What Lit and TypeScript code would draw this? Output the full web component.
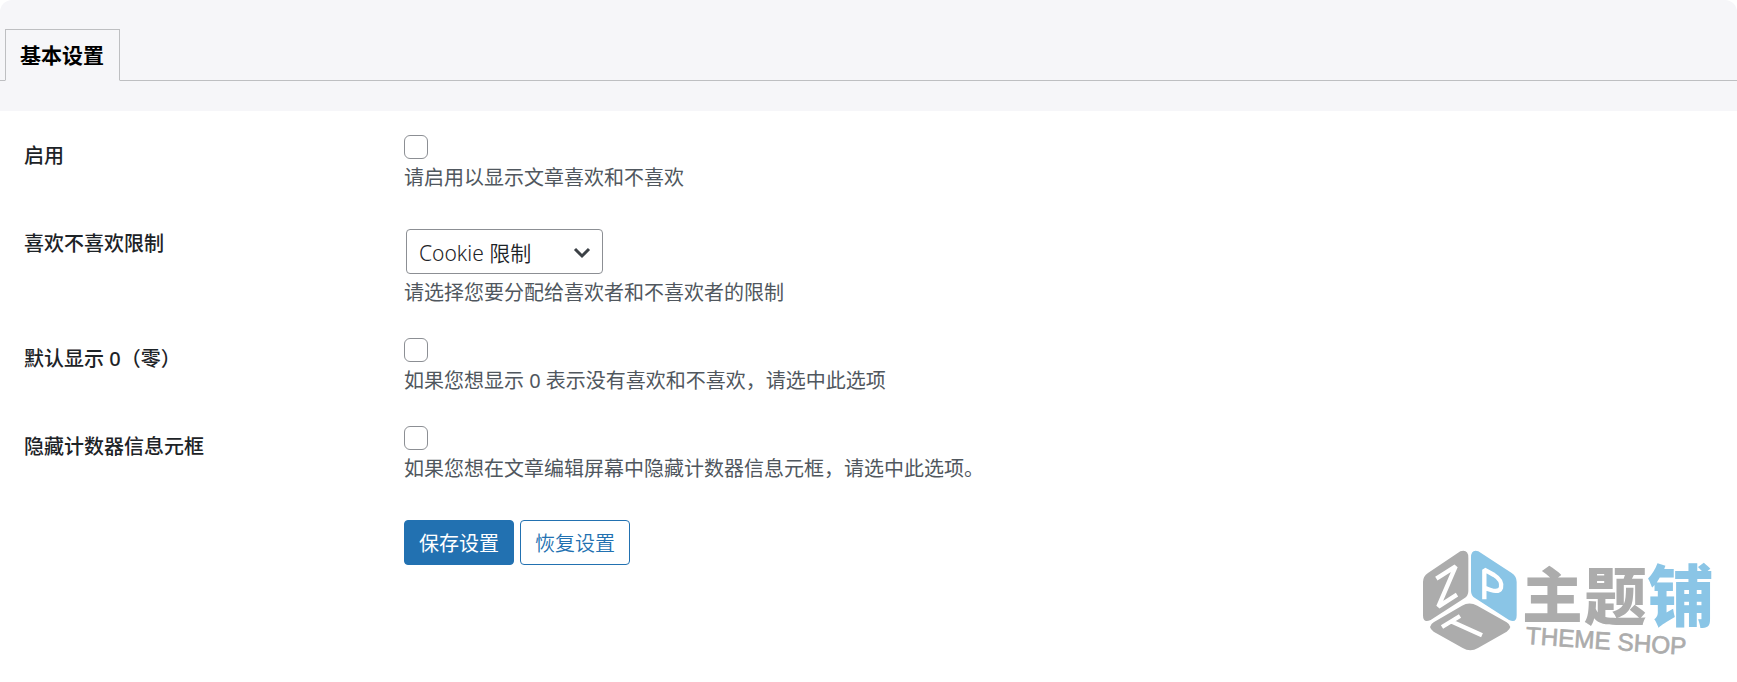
import { LitElement, html, css, svg } from "lit";
import { customElement, state } from "lit/decorators.js";

@customElement("theme-shop-logo")
class ThemeShopLogo extends LitElement {
  static styles = css`
    :host { display: block; }
    svg { display: block; width: 293px; height: 110px; overflow: visible; }
    .gray { fill: #acacac; }
    .blue { fill: #8ac5e6; }
    .stroke { fill: none; stroke: #fff; stroke-width: 13; stroke-linecap: butt; stroke-linejoin: bevel; }
    .name { font-family: "Noto Sans CJK SC", sans-serif; font-weight: 900; }
    .sub { font-family: "Liberation Sans", Arial, sans-serif; font-size: 73px; fill: #acacac; stroke: #acacac; stroke-width: 2; }
  `;

  render() {
    return html`<svg viewBox="60 50 879 330" role="img" aria-label="主题铺 THEME SHOP">
      ${svg`
      <path class="gray" d="M181 63 Q205 56 205 82 V182 Q205 196 193 204 L92 269 Q69 280 69 255 V155 Q69 138 84 128 Z"/>
      <path class="blue" d="M235 63 Q213 56 213 82 V182 Q213 196 226 204 L327 269 Q350 280 350 255 V155 Q350 138 335 128 Z"/>
      <path class="gray" d="M186 226 Q208 213 232 226 L320 276 Q341 289 320 304 L234 353 Q211 366 188 353 L101 304 Q80 289 101 276 Z"/>
      <path class="stroke" d="M109 145 L167 108 L115 229 L171 193"/>
      <path class="stroke" d="M253 207 V118 L282 134 Q308 150 303 172 Q296 192 253 171"/>
      <path class="stroke" d="M126 290 L180 257 M153 273 L246 315" />
      <text class="name gray" x="366" y="264" font-size="182">主</text>
      <text class="name gray" x="552" y="266" font-size="188">题</text>
      <text class="name blue" x="742" y="272" font-size="200">铺</text>
      <text class="sub" x="376" y="340" transform="rotate(4 376 340)">THEME SHOP</text>
      `}
    </svg>`;
  }
}

type Row = { id: string; label: string; help: string; options?: string[] };

const ROWS: Row[] = [
  { id: "enable", label: "启用", help: "请启用以显示文章喜欢和不喜欢" },
  { id: "limit", label: "喜欢不喜欢限制", help: "请选择您要分配给喜欢者和不喜欢者的限制", options: ["Cookie 限制"] },
  { id: "zero", label: "默认显示 0（零）", help: "如果您想显示 0 表示没有喜欢和不喜欢，请选中此选项" },
  { id: "metabox", label: "隐藏计数器信息元框", help: "如果您想在文章编辑屏幕中隐藏计数器信息元框，请选中此选项。" },
];

@customElement("app-root")
class AppRoot extends LitElement {
  static styles = css`
    :host {
      display: block;
      position: relative;
      min-height: 100vh;
      box-sizing: border-box;
      background: #fff;
      color: #1d2327;
      font-family: "Noto Sans", "Noto Sans CJK SC", sans-serif;
      font-size: 20px;
      line-height: 28px;
    }
    *, *::before { box-sizing: border-box; }
    .head {
      padding: 29px 0 30px;
      background: #f6f6f9;
      border-radius: 12px 12px 0 0;
    }
    .tabs { display: flex; padding-left: 5px; border-bottom: 1px solid #bebfc2; }
    .tab {
      margin-bottom: -1px;
      padding: 11px 15px 11px 14px;
      border: 1px solid #bebfc2;
      border-bottom-color: #f6f6f9;
      background: #f6f6f9;
      color: #000;
      font-size: 21px;
      font-weight: 700;
      text-decoration: none;
    }
    .form { padding: 2px 24px 0; }
    .row { display: grid; grid-template-columns: 380px 1fr; }
    .label { padding-top: 29px; font-weight: 500; }
    .field { padding: 22px 0 9px; }
    .check {
      appearance: none;
      display: block;
      width: 24px;
      height: 24px;
      margin: 0 0 5px;
      border: 1px solid #8c8f94;
      border-radius: 6px;
      background: #fff;
    }
    .check:checked { background: #2271b1; border-color: #2271b1; }
    .pick { position: relative; width: 197px; margin: 6px 2px 5px; }
    .select {
      appearance: none;
      display: block;
      width: 100%;
      height: 45px;
      padding: 2px 36px 0 12px;
      border: 1px solid #8c8f94;
      border-radius: 4px;
      background: #fff;
      color: #1d2327;
      font: inherit;
      font-size: 21px;
      font-weight: 350;
    }
    .arrow { position: absolute; right: 12px; top: 18px; width: 18px; height: 12px; pointer-events: none; }
    .help { margin: 0; color: #50575e; }
    .actions { grid-column: 2; display: flex; gap: 6px; padding-top: 28px; }
    .button {
      height: 45px;
      padding: 2px 14px 0;
      border: 1px solid #2271b1;
      border-radius: 4px;
      background: #fff;
      color: #2271b1;
      font: inherit;
      font-weight: 350;
    }
    .primary { background: #2271b1; color: #fff; font-weight: 400; }
    .mark { position: absolute; right: 24px; bottom: 25px; pointer-events: none; }
  `;

  @state() private values: Record<string, boolean> = {};

  private control(row: Row) {
    if (row.options) {
      return html`<div class="pick">
        <select class="select" id=${row.id} aria-describedby="${row.id}-help">
          ${row.options.map((o) => html`<option>${o}</option>`)}
        </select>
        <svg class="arrow" viewBox="0 0 18 12" fill="none" stroke="#3c4146" stroke-width="3"><path d="M2 2l7 7 7-7" /></svg>
      </div>`;
    }
    return html`<input
      class="check"
      type="checkbox"
      id=${row.id}
      aria-describedby="${row.id}-help"
      .checked=${!!this.values[row.id]}
      @change=${(e: Event) => (this.values = { ...this.values, [row.id]: (e.target as HTMLInputElement).checked })}
    />`;
  }

  render() {
    return html`
      <header class="head">
        <nav class="tabs"><a class="tab" href="#basic" aria-current="page">基本设置</a></nav>
      </header>
      <form class="form" id="basic" @submit=${(e: Event) => e.preventDefault()}>
        ${ROWS.map(
          (row) => html`<div class="row">
            <label class="label" for=${row.id}>${row.label}</label>
            <div class="field">
              ${this.control(row)}
              <p class="help" id="${row.id}-help">${row.help}</p>
            </div>
          </div>`
        )}
        <div class="row">
          <div class="actions">
            <button class="button primary" type="submit">保存设置</button>
            <button class="button" type="reset" @click=${() => (this.values = {})}>恢复设置</button>
          </div>
        </div>
      </form>
      <theme-shop-logo class="mark"></theme-shop-logo>
    `;
  }
}
